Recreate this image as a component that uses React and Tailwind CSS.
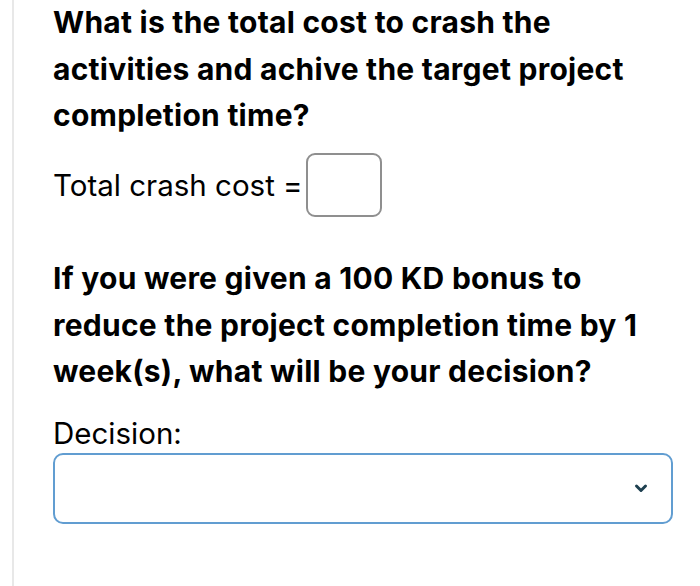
import React from 'react';

const App = () => {
  return (
    <div className="w-[700px] h-[586px] bg-white overflow-hidden flex" style={{ fontFamily: 'Inter, "Noto Sans", sans-serif' }}>
      <div className="w-[14px] shrink-0 border-r-2 border-[#e8e8e8]" />
      <div className="flex-1 min-w-0 pl-[39px] pr-[27px] text-black">
        <h2 className="text-[30px] font-bold leading-[46.5px] mt-[-1px] tracking-[0.25px] whitespace-nowrap">
          What is the total cost to crash the
          <br />
          activities and achive the target project
          <br />
          completion time?
        </h2>
        <div className="flex items-center mt-[14px] text-[29.5px] leading-[32px]">
          <span>Total crash cost =</span>
          <div className="ml-[3px] w-[76px] h-[64px] border-2 border-[#8f8f8f] rounded-[9px]" />
        </div>
        <h2 className="text-[30px] font-bold leading-[46.5px] mt-[38.5px] tracking-[0.25px] whitespace-nowrap">
          If you were given a 100 KD bonus to
          <br />
          reduce the project completion time by 1
          <br />
          week(s), what will be your decision?
        </h2>
        <div className="mt-[22px] text-[29.5px] leading-[32px]">Decision:</div>
        <div className="mt-[4px] h-[71px] border-2 border-[#619dd1] rounded-[10px] flex items-center justify-end pr-[23px]">
          <svg width="14" height="11" viewBox="0 0 14 11" fill="none">
            <path d="M2.5 3 L7 7.5 L11.5 3" stroke="#1e4050" strokeWidth="3" strokeLinecap="round" strokeLinejoin="round" />
          </svg>
        </div>
      </div>
    </div>
  );
};

export default App;
